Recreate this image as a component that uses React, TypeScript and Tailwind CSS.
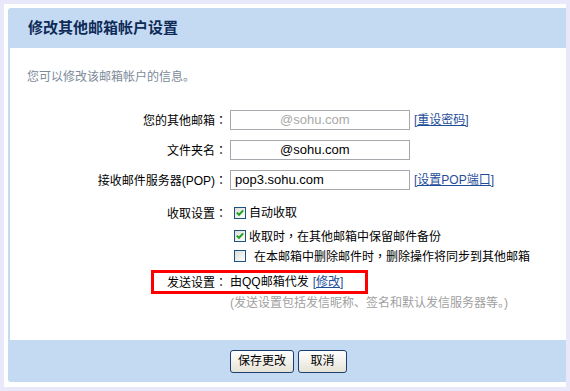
import React from 'react';

const FONT = "font-['Liberation_Sans','Noto_Sans_CJK_SC',sans-serif]";

// centred full-width punctuation, as in the reference
const P: React.FC<{ c: string }> = ({ c }) => (
  <span className="font-['Noto_Sans_CJK_TC',sans-serif]">{c}</span>
);

const CheckBox: React.FC<{ checked?: boolean }> = ({ checked }) => (
  <span className="relative flex h-[12px] w-[12px] flex-shrink-0 items-center justify-center border border-[#1c5180] bg-gradient-to-br from-[#dcdcd7] to-white">
    {checked && (
      <svg width="10" height="10" viewBox="0 0 10 10" className="absolute">
        <path d="M1.8 4.6 L4 6.8 L8.2 2.4" fill="none" stroke="#21a121" strokeWidth="2" />
      </svg>
    )}
  </span>
);

const Field: React.FC<{ value: string; gray?: boolean; indent?: boolean }> = ({ value, gray, indent }) => (
  <div
    className={`flex h-[20px] w-[180px] items-center border border-[#a5a9ae] bg-white text-[13px] ${
      gray ? 'text-[#a8a8a8]' : 'text-black'
    } ${indent ? 'pl-[49px]' : 'pl-[4px]'}`}
  >
    {value}
  </div>
);

const Link: React.FC<{ children: React.ReactNode }> = ({ children }) => (
  <a href="#" className="text-[#1f4d99] underline">
    {children}
  </a>
);

const Label: React.FC<{ children: React.ReactNode }> = ({ children }) => (
  <div className="w-[218px] flex-shrink-0 pr-[1px] text-right">
    {children}
    <P c="：" />
  </div>
);

export default function App() {
  return (
    <div className={`h-[391px] w-[570px] overflow-hidden bg-[#e8e8fa] px-[4px] pt-[4px] text-[12px] text-black ${FONT}`}>
      <div className="h-[383px] bg-white pb-[5px] pl-[4px] pt-[4px]">
        <div className="flex h-[374px] flex-col rounded-l-[3px] bg-[#c4d9f2]">
          {/* Header */}
          <div className="flex h-[40px] items-center pl-[20px] text-[15px] font-bold text-[#0e2b58]">
            修改其他邮箱帐户设置
          </div>

          {/* Content */}
          <div className="ml-[2px] h-[292px] bg-white pt-[20px]">
            <p className="pl-[17px] leading-[18px] text-[#7c8a99]">您可以修改该邮箱帐户的信息。</p>

            <div className="mt-[24px] flex flex-col">
              <div className="flex h-[20px] items-center">
                <Label>您的其他邮箱</Label>
                <div className="ml-[2px] flex items-center gap-[4px]">
                  <Field value="@sohu.com" gray indent />
                  <Link>[重设密码]</Link>
                </div>
              </div>
              <div className="mt-[10px] flex h-[20px] items-center">
                <Label>文件夹名</Label>
                <div className="ml-[2px] flex items-center">
                  <Field value="@sohu.com" indent />
                </div>
              </div>
              <div className="mt-[10px] flex h-[20px] items-center">
                <Label>接收邮件服务器(POP)</Label>
                <div className="ml-[2px] flex items-center gap-[4px]">
                  <Field value="pop3.sohu.com" />
                  <Link>[设置POP端口]</Link>
                </div>
              </div>

              <div className="mt-[14px] flex h-[18px] items-center">
                <Label>收取设置</Label>
                <div className="ml-[6px] flex items-center gap-[3px]">
                  <CheckBox checked />
                  <span>自动收取</span>
                </div>
              </div>
              <div className="mt-[5px] flex h-[18px] items-center">
                <div className="w-[218px] flex-shrink-0" />
                <div className="ml-[6px] flex items-center gap-[3px]">
                  <CheckBox checked />
                  <span>
                    收取时<P c="，" />在其他邮箱中保留邮件备份
                  </span>
                </div>
              </div>
              <div className="mt-[2px] flex h-[18px] items-center">
                <div className="w-[218px] flex-shrink-0" />
                <div className="ml-[6px] flex items-center gap-[8px]">
                  <CheckBox />
                  <span>
                    在本邮箱中删除邮件时<P c="，" />删除操作将同步到其他邮箱
                  </span>
                </div>
              </div>

              {/* Send settings, highlighted */}
              <div className="ml-[141px] mt-[5px] flex h-[24px] w-[217px] items-center border-[3px] border-[#ff0000]">
                <div className="w-[74px] flex-shrink-0 pr-[1px] text-right">
                  发送设置<P c="：" />
                </div>
                <div className="ml-[2px] flex items-center gap-[4px] whitespace-nowrap">
                  <span>由QQ邮箱代发</span>
                  <Link>[修改]</Link>
                </div>
              </div>
              <div className="flex h-[18px] items-center">
                <div className="w-[218px] flex-shrink-0" />
                <span className="ml-[2px] text-[#a0a0a0]">(发送设置包括发信昵称、签名和默认发信服务器等。)</span>
              </div>
            </div>
          </div>

          {/* Footer */}
          <div className="flex flex-1 items-center justify-center gap-[4px] pl-[3px]">
            <button className="h-[23px] w-[64px] rounded-[3px] border border-[#1c3f6f] bg-gradient-to-b from-white to-[#e6e3d6] text-[12px] text-black">
              保存更改
            </button>
            <button className="h-[23px] w-[49px] rounded-[3px] border border-[#1c3f6f] bg-gradient-to-b from-white to-[#e6e3d6] text-[12px] text-black">
              取消
            </button>
          </div>
        </div>
      </div>
    </div>
  );
}
